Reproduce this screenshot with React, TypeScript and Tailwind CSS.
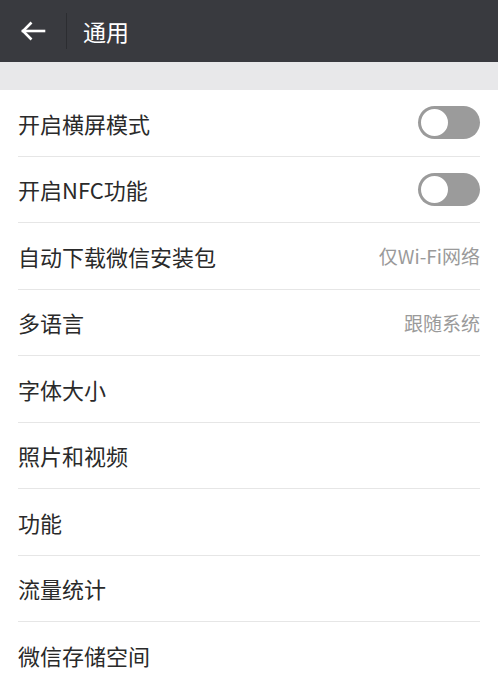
import React from "react";

const font = { fontFamily: '"Noto Sans CJK SC", "Noto Sans", sans-serif' };

function Toggle() {
  return (
    <div className="relative w-[62px] h-[33px] rounded-full bg-[#9b9b9b]">
      <div className="absolute left-[1px] top-[1px] w-[31px] h-[31px] rounded-full bg-white border-[2px] border-[#9b9b9b]" />
    </div>
  );
}

const rows: { label: string; right?: string; toggle?: boolean }[] = [
  { label: "开启横屏模式", toggle: true },
  { label: "开启NFC功能", toggle: true },
  { label: "自动下载微信安装包", right: "仅Wi-Fi网络" },
  { label: "多语言", right: "跟随系统" },
  { label: "字体大小" },
  { label: "照片和视频" },
  { label: "功能" },
  { label: "流量统计" },
  { label: "微信存储空间" },
];

export default function App() {
  return (
    <div className="w-[498px] h-[686px] overflow-hidden bg-white" style={font}>
      <div className="h-[62px] bg-[#393a3f] flex items-center">
        <div className="w-[66px] flex items-center pl-[20px]">
          <svg width="26" height="22" viewBox="0 0 26 22" fill="none" stroke="white" strokeWidth="2.6" strokeLinecap="square">
            <path d="M3 11h21" />
            <path d="M11.5 2.5L3 11l8.5 8.5" strokeLinecap="butt" />
          </svg>
        </div>
        <div className="w-[1px] h-[36px] bg-[#2c2d31]" />
        <div className="pl-[16px] text-white text-[23px] leading-none">通用</div>
      </div>
      <div className="h-[28px] bg-[#e8e8ea]" />
      <div>
        {rows.map((r, i) => (
          <div key={i} className="px-[18px]">
            <div className={`h-[66.5px] flex items-center justify-between ${i < rows.length - 1 ? "border-b border-[#e6e6e6]" : ""}`}>
              <span className="text-[22px] text-[#2a2a2a] leading-none">{r.label}</span>
              {r.toggle ? <Toggle /> : r.right ? <span className="text-[19px] text-[#9a9a9a] leading-none">{r.right}</span> : null}
            </div>
          </div>
        ))}
      </div>
    </div>
  );
}
